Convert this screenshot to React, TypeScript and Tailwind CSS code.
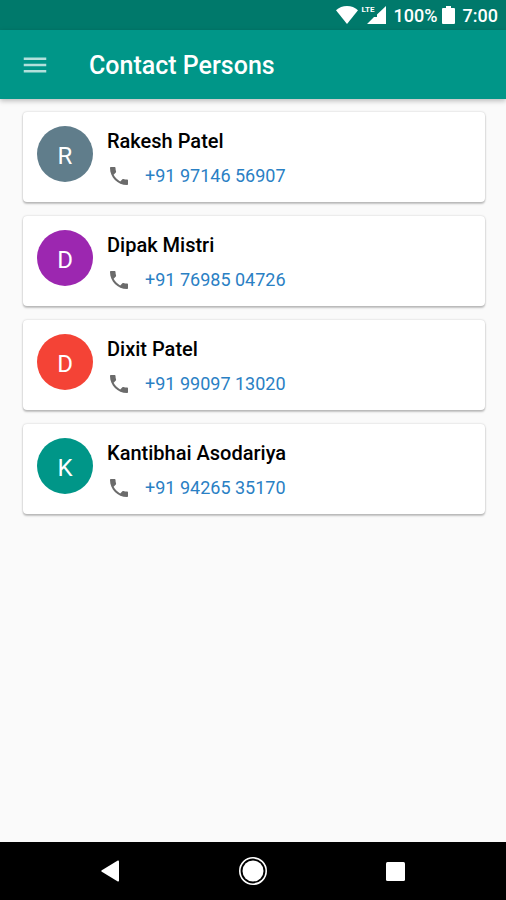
import { clsx } from "clsx";

type Contact = {
  name: string;
  phone: string;
  color: string;
};

const contacts: Contact[] = [
  { name: "Rakesh Patel", phone: "+91 97146 56907", color: "bg-[#607d8b]" },
  { name: "Dipak Mistri", phone: "+91 76985 04726", color: "bg-[#9c27b0]" },
  { name: "Dixit Patel", phone: "+91 99097 13020", color: "bg-[#f44336]" },
  { name: "Kantibhai Asodariya", phone: "+91 94265 35170", color: "bg-[#009688]" },
];

function StatusBar() {
  return (
    <div className="flex h-[30px] items-center justify-end bg-[#00796b] pr-2 text-lg leading-none font-medium text-white">
      <svg width="22" height="18" viewBox="0 0 22 18" fill="currentColor" aria-hidden="true">
        <path d="M11 18 0 4.2C3 1.6 6.800 0 11 0s8 1.600 11 4.200L11 18Z" />
      </svg>
      <div className="relative ml-1 h-[18px] w-6">
        <svg width="24" height="18" viewBox="0 0 24 18" fill="currentColor" aria-hidden="true">
          <path d="M24 0v18H5l7-7h3V8.500L24 0Z" />
        </svg>
        <span className="absolute top-0 left-0 text-[8px] leading-[8px] font-bold">LTE</span>
      </div>
      <span className="ml-2 pt-0.5">100%</span>
      <svg className="ml-1" width="13" height="18" viewBox="0 0 13 18" fill="currentColor" aria-hidden="true">
        <path d="M4 0h5v2h3a1 1 0 0 1 1 1v14a1 1 0 0 1-1 1H1a1 1 0 0 1-1-1V3a1 1 0 0 1 1-1h3V0Z" />
      </svg>
      <span className="ml-2 pt-0.5">7:00</span>
    </div>
  );
}

function Header() {
  return (
    <header className="flex h-[69px] items-center bg-[#009688] pl-5 text-white shadow-[0_2px_5px_rgba(0,0,0,0.25)]">
      <button aria-label="Open menu" className="text-white/70">
        <svg width="30" height="30" viewBox="0 0 24 24" fill="currentColor">
          <path d="M3 18h18v-2H3v2zm0-5h18v-2H3v2zm0-7v2h18V6H3z" />
        </svg>
      </button>
      <h1 className="ml-[39px] pt-0.5 text-[25px] leading-8 font-medium">Contact Persons</h1>
    </header>
  );
}

function ContactCard({ name, phone, color }: Contact) {
  return (
    <li className="flex h-[90px] items-start gap-[14px] rounded-sm bg-white px-[14px] pt-[14px] shadow-[0_2px_2px_rgba(0,0,0,0.22),0_0_2px_rgba(0,0,0,0.22)]">
      <div
        className={clsx(
          "flex size-14 shrink-0 items-center justify-center rounded-full pt-1 text-2xl leading-none text-white",
          color
        )}
      >
        {name[0]}
      </div>
      <div>
        <h2 className="text-xl leading-[30px] font-medium text-black">{name}</h2>
        <a
          href={`tel:${phone.replaceAll(" ", "")}`}
          className="mt-1.5 flex items-center gap-[14px] text-lg leading-7 text-[#2a80c4]"
        >
          <svg className="text-[#6b6b6b]" width="24" height="24" viewBox="0 0 24 24" fill="currentColor" aria-hidden="true">
            <path d="M6.620 10.790c1.440 2.830 3.760 5.140 6.590 6.590l2.200-2.200c.27-.27.67-.36 1.020-.24 1.120.37 2.330.57 3.570.57.55 0 1 .45 1 1V20c0 .55-.45 1-1 1-9.390 0-17-7.610-17-17 0-.55.45-1 1-1h3.500c.55 0 1 .45 1 1 0 1.250.2 2.450.57 3.570.11.35.03.74-.25 1.020l-2.200 2.200z" />
          </svg>
          {phone}
        </a>
      </div>
    </li>
  );
}

function NavigationBar() {
  return (
    <nav className="flex h-[58px] items-center justify-center gap-[114px] bg-black text-white">
      <button aria-label="Back">
        <svg width="28" height="28" viewBox="0 0 28 28" fill="currentColor">
          <path d="M22 4.200v19.600c0 .7-.6 1-1.200.7L4.800 14.800c-.6-.4-.6-1.200 0-1.600l16-9.700c.6-.3 1.200 0 1.200.7Z" />
        </svg>
      </button>
      <button aria-label="Home">
        <svg width="28" height="28" viewBox="0 0 28 28">
          <circle cx="14" cy="14" r="13.200" fill="none" stroke="currentColor" strokeWidth="1.600" />
          <circle cx="14" cy="14" r="10.500" fill="currentColor" />
        </svg>
      </button>
      <button aria-label="Recent apps">
        <svg width="28" height="28" viewBox="0 0 28 28" fill="currentColor">
          <rect x="5" y="5" width="19" height="19" rx="1.500" />
        </svg>
      </button>
    </nav>
  );
}

function App() {
  return (
    <div className="flex min-h-screen flex-col bg-[#fafafa] font-[Roboto,sans-serif]">
      <StatusBar />
      <Header />
      <main className="grow pt-[13px] pr-[21px] pb-4 pl-[23px]">
        <ul className="flex flex-col gap-[14px]">
          {contacts.map((contact) => (
            <ContactCard key={contact.phone} {...contact} />
          ))}
        </ul>
      </main>
      <NavigationBar />
    </div>
  );
}

export default App;
